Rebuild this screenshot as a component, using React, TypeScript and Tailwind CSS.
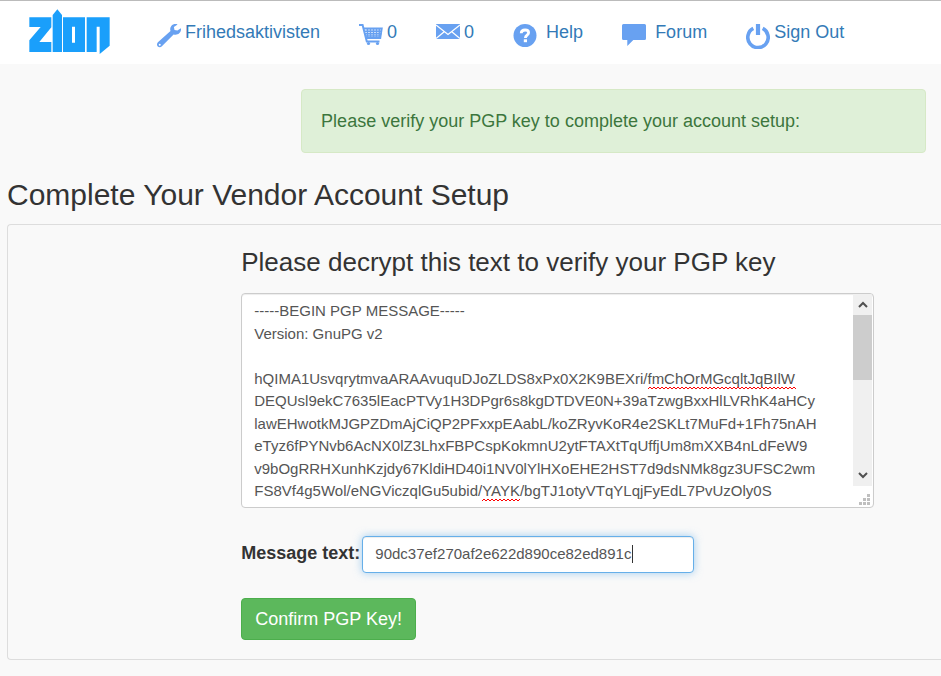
import { useState } from "react";
import type { ReactNode } from "react";

const PGP_MESSAGE = `-----BEGIN PGP MESSAGE-----
Version: GnuPG v2

hQIMA1UsvqrytmvaARAAvuquDJoZLDS8xPx0X2K9BEXri/fmChOrMGcqltJqBIlW
DEQUsl9ekC7635lEacPTVy1H3DPgr6s8kgDTDVE0N+39aTzwgBxxHlLVRhK4aHCy
lawEHwotkMJGPZDmAjCiQP2PFxxpEAabL/koZRyvKoR4e2SKLt7MuFd+1Fh75nAH
eTyz6fPYNvb6AcNX0lZ3LhxFBPCspKokmnU2ytFTAXtTqUffjUm8mXXB4nLdFeW9
v9bOgRRHXunhKzjdy67KldiHD40i1NV0lYlHXoEHE2HST7d9dsNMk8gz3UFSC2wm
FS8Vf4g5Wol/eNGViczqlGu5ubid/YAYK/bgTJ1otyVTqYLqjFyEdL7PvUzOly0S`;

function Logo() {
  return (
    <svg width="81" height="46" viewBox="88 28 243 138" fill="#1a9ffb">
      <path d="M89 53H155V83L119 127H155V157H89V122L123 82H89z" />
      <path d="M159 157V46L173 29L187 46V157z" />
      <path fillRule="evenodd" d="M190 53H256V157H190zM217 81V129H226V81z" />
      <path d="M261 53H330V138L300 163V81H291V157H261z" />
    </svg>
  );
}

function WrenchIcon() {
  return (
    <svg width="24" height="24" viewBox="0 0 24 24" fill="#68a1f1">
      <path
        fillRule="evenodd"
        d="M20.600 .4C18.400-.4 15.700.1 14.300 2c-1.200 1.500-1.400 3.300-.8 4.900L.9 18.300c-1.200 1.200-1.200 3-.1 4.100s2.900 1.100 4.100-.1L16.600 10.400c2 .7 4.100.3 5.600-1.100 1.500-1.400 2.100-3.300 1.700-5.100L20.400 6.500l-2.900-.6-.6-2.800zM2.700 19.800a1 1 0 1 0 .1 2 1 1 0 0 0-.1-2z"
      />
    </svg>
  );
}

function CartIcon() {
  return (
    <svg width="24" height="22" viewBox="0 0 24 22" fill="none" stroke="#68a1f1">
      <path d="M0 1h3.600l4.200 16.500h12.700" strokeWidth="2" />
      <path d="M4.500 4.500H22.800L21.300 14H7" strokeWidth="1.800" />
      <path d="M5 7.200h17.500M5.500 9.700h17M6 12h16" strokeWidth="1.500" />
      <path d="M8.500 5v9M11.500 5v9M14.500 5v9M17.500 5v9M20.300 5v9" strokeWidth="1.700" />
      <circle cx="9.500" cy="19.500" r="1.600" fill="#68a1f1" stroke="none" />
      <circle cx="18.500" cy="19.500" r="1.600" fill="#68a1f1" stroke="none" />
    </svg>
  );
}

function MailIcon() {
  return (
    <svg width="24" height="15" viewBox="0 0 24 15">
      <path d="M0 0h24v15H0z" fill="#68a1f1" />
      <path
        d="M0 1l12 9.500L24 1M0 14.500l8.500-7M24 14.500l-8.500-7"
        fill="none"
        stroke="#fff"
        strokeWidth="1.300"
      />
    </svg>
  );
}

function HelpIcon() {
  return (
    <svg width="24" height="24" viewBox="0 0 24 24">
      <circle cx="12" cy="11.500" r="11.500" fill="#68a1f1" />
      <path
        d="M8.200 9.200c.1-2.200 1.600-3.200 3.900-3.200 2.200 0 3.500 1 3.500 2.800 0 2.500-3.200 2.300-3.200 5.200"
        fill="none"
        stroke="#fff"
        strokeWidth="2.800"
      />
      <path d="M10.800 15.300h3.200v2.900h-3.200z" fill="#fff" />
    </svg>
  );
}

function ForumIcon() {
  return (
    <svg width="24" height="22" viewBox="0 0 24 22" fill="#68a1f1">
      <path d="M1.500 0h21A1.500 1.500 0 0 1 24 1.500v13a1.500 1.500 0 0 1-1.500 1.500H11.300L5.300 22v-6H1.500A1.500 1.500 0 0 1 0 14.500v-13A1.500 1.500 0 0 1 1.500 0z" />
    </svg>
  );
}

function PowerIcon() {
  return (
    <svg width="24" height="25" viewBox="0 0 24 25" fill="none" stroke="#68a1f1">
      <path d="M7.300 4.300A10.200 10.200 0 1 0 16.700 4.300" strokeWidth="3.600" />
      <path d="M12 0v11" strokeWidth="4.200" />
    </svg>
  );
}

function NavItem({
  icon,
  wide = false,
  children,
}: {
  icon: ReactNode;
  wide?: boolean;
  children: ReactNode;
}) {
  return (
    <a
      href="#"
      className={`flex items-start text-[#337ab7] ${wide ? "gap-[9px]" : "gap-1"}`}
    >
      <span className="flex h-6 w-6 items-start">{icon}</span>
      <span className="-mt-1 leading-6">{children}</span>
    </a>
  );
}

// Wavy line under a word the spell checker does not know
function Squiggle({ width }: { width: number }) {
  let d = "M0 3";
  for (let x = 2; x <= width; x += 2) d += `L${x} ${x % 4 === 2 ? 1 : 3}`;
  return (
    <svg width={width} height="4" fill="none" stroke="#f00">
      <path d={d} />
    </svg>
  );
}

export default function App() {
  const [message, setMessage] = useState(PGP_MESSAGE);
  const [answer, setAnswer] = useState("90dc37ef270af2e622d890ce82ed891c");

  return (
    <div className="min-h-screen overflow-x-hidden bg-[#f9f9f9] font-['Liberation_Sans',Arial,sans-serif] text-lg text-[#333]">
      {/* --- Navigation --- */}
      <nav className="flex h-16 items-start border-t border-[#bbb] bg-white pl-[29px]">
        <a href="#" aria-label="Zion" className="mr-[47px] mt-2">
          <Logo />
        </a>
        <div className="mt-[23px] flex gap-[39px] whitespace-nowrap">
          <NavItem icon={<WrenchIcon />}>Frihedsaktivisten</NavItem>
          <NavItem icon={<CartIcon />}>0</NavItem>
          <NavItem icon={<MailIcon />}>0</NavItem>
          <NavItem icon={<HelpIcon />} wide>
            Help
          </NavItem>
          <NavItem icon={<ForumIcon />} wide>
            Forum
          </NavItem>
          <NavItem icon={<PowerIcon />}>Sign Out</NavItem>
        </div>
      </nav>

      {/* --- Notice --- */}
      <div className="pl-[32%] pr-[15px] pt-[25px]">
        <div
          role="status"
          className="rounded border border-[#d6e9c6] bg-[#dff0d8] px-[19px] py-[18px] leading-[26px] text-[#3c763d]"
        >
          Please verify your PGP key to complete your account setup:
        </div>
      </div>

      <h1 className="ml-[7px] mt-6 text-3xl leading-9">
        Complete Your Vendor Account Setup
      </h1>

      {/* --- PGP verification --- */}
      <section className="ml-[7px] mt-[11px] rounded-l border border-r-0 border-[#ddd]">
        <form
          className="pb-[19px] pl-[25%] pr-[67px] pt-[19px]"
          onSubmit={(e) => e.preventDefault()}
        >
          <h2 className="text-[26px] leading-9">
            <label htmlFor="pgp-message">
              Please decrypt this text to verify your PGP key
            </label>
          </h2>

          <div className="relative mt-[13px] flex h-[215px] overflow-hidden rounded border border-[#ccc] bg-white shadow-[inset_0_1px_1px_rgba(0,0,0,0.075)]">
            <textarea
              id="pgp-message"
              spellCheck={false}
              value={message}
              onChange={(e) => setMessage(e.target.value)}
              className="min-w-0 flex-1 resize-none overflow-hidden whitespace-pre bg-transparent px-3 pt-[6px] text-[15px] leading-normal text-[#555] outline-none"
            />
            <div className="pointer-events-none absolute left-[406px] top-[92px]">
              <Squiggle width={148} />
            </div>
            <div className="pointer-events-none absolute left-[240px] top-[204px]">
              <Squiggle width={38} />
            </div>

            <div className="flex w-5 flex-col">
              <div className="flex h-[192px] w-[19px] flex-col bg-[#f0f0f0]">
                <button
                  type="button"
                  aria-label="Scroll up"
                  className="flex h-[21px] items-center justify-center"
                >
                  <svg width="10" height="7" fill="none" stroke="#505050" strokeWidth="2">
                    <path d="M1 6l4-4 4 4" />
                  </svg>
                </button>
                <div className="h-[65px] bg-[#cdcdcd]" />
                <button
                  type="button"
                  aria-label="Scroll down"
                  className="mt-auto flex h-[21px] items-center justify-center"
                >
                  <svg width="10" height="7" fill="none" stroke="#505050" strokeWidth="2">
                    <path d="M1 1l4 4 4-4" />
                  </svg>
                </button>
              </div>
              <svg className="ml-[6px] mt-2" width="11" height="11" fill="#bfbfbf">
                <path d="M8 0h3v3H8zM4 4h3v3H4zM8 4h3v3H8zM0 8h3v3H0zM4 8h3v3H4zM8 8h3v3H8z" />
              </svg>
            </div>
          </div>

          <div className="mt-7 flex items-start gap-[2px]">
            <label
              htmlFor="message-text"
              className="whitespace-nowrap font-bold leading-[34px]"
            >
              Message text:
            </label>
            <div className="relative w-[332px]">
              <input
                id="message-text"
                type="text"
                value={answer}
                onChange={(e) => setAnswer(e.target.value)}
                className="block h-[37px] w-full rounded border border-[#66afe9] bg-white px-3 pb-[2px] text-[15px] text-[#555] shadow-[inset_0_1px_1px_rgba(0,0,0,0.075),0_0_8px_rgba(102,175,233,0.6)] outline-none"
              />
              <span className="pointer-events-none absolute left-[270px] top-[9px] h-[18px] w-px bg-[#333]" />
            </div>
          </div>

          <button
            type="submit"
            className="mt-[25px] block h-[42px] rounded border border-[#4cae4c] bg-[#5cb85c] px-[13px] text-white"
          >
            Confirm PGP Key!
          </button>
        </form>
      </section>
    </div>
  );
}
